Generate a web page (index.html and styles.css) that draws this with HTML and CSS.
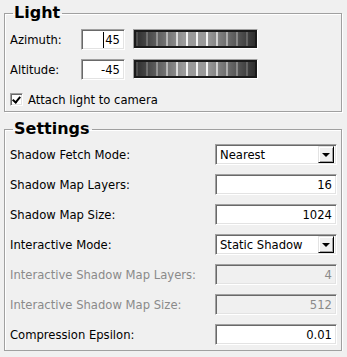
FILE: index.html
```html
<!DOCTYPE html>
<html lang="en">
<head>
    <meta charset="UTF-8">
    <title>Light Settings</title>
    <link rel="stylesheet" href="styles.css">
</head>
<body>
    <fieldset class="group light">
        <legend>Light</legend>
        <div class="row">
            <span class="label short">Azimuth:</span>
            <div class="field small"><span class="caret"></span>45</div>
            <div class="wheel"><div class="wheel-inner"></div></div>
        </div>
        <div class="row">
            <span class="label short">Altitude:</span>
            <div class="field small">-45</div>
            <div class="wheel"><div class="wheel-inner"></div></div>
        </div>
        <label class="check">
            <span class="box checked"></span>
            Attach light to camera
        </label>
    </fieldset>

    <fieldset class="group settings">
        <legend>Settings</legend>
        <div class="row">
            <span class="label">Shadow Fetch Mode:</span>
            <div class="combo">
                <span class="combo-text">Nearest</span>
                <span class="combo-btn"></span>
            </div>
        </div>
        <div class="row">
            <span class="label">Shadow Map Layers:</span>
            <div class="field wide">16</div>
        </div>
        <div class="row">
            <span class="label">Shadow Map Size:</span>
            <div class="field wide">1024</div>
        </div>
        <div class="row">
            <span class="label">Interactive Mode:</span>
            <div class="combo">
                <span class="combo-text">Static Shadow</span>
                <span class="combo-btn"></span>
            </div>
        </div>
        <div class="row disabled">
            <span class="label">Interactive Shadow Map Layers:</span>
            <div class="field wide">4</div>
        </div>
        <div class="row disabled">
            <span class="label">Interactive Shadow Map Size:</span>
            <div class="field wide">512</div>
        </div>
        <div class="row">
            <span class="label">Compression Epsilon:</span>
            <div class="field wide">0.01</div>
        </div>
    </fieldset>
</body>
</html>
```

FILE: styles.css
```css
body {
    margin: 0;
    padding: 5px 5px 0 4px;
    background-color: #f0f0f0;
    font-family: "DejaVu Sans", sans-serif;
    font-size: 11.6px;
    color: #000;
}
.group {
    margin: 0;
    padding: 8px 4px 5px 5px;
    border: 1px solid #a0a0a0;
    box-shadow: inset 1px 1px 0 #fff, 1px 1px 0 #fff;
    display: flex;
    flex-direction: column;
    gap: 9px;
}
.group legend {
    padding: 0 2px 0 1px;
    margin-left: 3px;
    font-size: 16px;
    line-height: 16px;
    font-weight: bold;
}
.settings {
    margin-top: 9px;
    padding-top: 7px;
}
.row {
    display: flex;
    align-items: center;
    height: 21px;
}
.label {
    flex: 1;
    white-space: nowrap;
}
.label.short {
    flex: 0 0 71px;
}
.disabled .label,
.disabled .field {
    color: #8a8a8a;
}
.disabled .field {
    background-color: #f0f0f0;
}
.field {
    box-sizing: border-box;
    height: 21px;
    background-color: #fff;
    border-style: solid;
    border-width: 1px;
    border-color: #a0a0a0 #fff #fff #a0a0a0;
    box-shadow: inset 1px 1px 0 #696969, inset -1px -1px 0 #e3e3e3;
    padding: 0 4px 0 0;
    display: flex;
    align-items: center;
    justify-content: flex-end;
}
.field.small {
    width: 44px;
}
.field.wide {
    width: 122px;
}
.caret {
    width: 1px;
    height: 16px;
    background-color: #000;
    margin-right: 1px;
}
.wheel {
    box-sizing: border-box;
    margin-left: 8px;
    width: 125px;
    height: 20px;
    border-style: solid;
    border-width: 1px;
    border-color: #a0a0a0 #fff #fff #a0a0a0;
    align-self: flex-start;
}
.wheel-inner {
    height: 100%;
    box-sizing: border-box;
    border: 2px solid #1a1a1a;
    background:
        linear-gradient(to right, rgba(0, 0, 0, 0.7), rgba(0, 0, 0, 0) 40%, rgba(0, 0, 0, 0) 60%, rgba(0, 0, 0, 0.7)),
        repeating-linear-gradient(to right, #f4f4f4 0 2px, #9a9a9a 2px 10px);
}
.check {
    display: flex;
    align-items: center;
    height: 13px;
    margin-top: 4px;
    gap: 5px;
}
.box {
    box-sizing: border-box;
    width: 13px;
    height: 13px;
    background-color: #fff;
    border-style: solid;
    border-width: 1px;
    border-color: #a0a0a0 #fff #fff #a0a0a0;
    box-shadow: inset 1px 1px 0 #696969, inset -1px -1px 0 #e3e3e3;
    position: relative;
}
.box.checked::after {
    content: "";
    position: absolute;
    left: 3px;
    top: 1px;
    width: 3px;
    height: 6px;
    border: solid #000;
    border-width: 0 2px 2px 0;
    transform: rotate(40deg);
}
.combo {
    box-sizing: border-box;
    width: 122px;
    height: 21px;
    background-color: #fff;
    border-style: solid;
    border-width: 1px;
    border-color: #a0a0a0 #fff #fff #a0a0a0;
    box-shadow: inset 1px 1px 0 #696969, inset -1px -1px 0 #e3e3e3;
    display: flex;
    align-items: center;
    padding: 2px;
}
.combo-text {
    flex: 1;
    padding-left: 2px;
}
.combo-btn {
    box-sizing: border-box;
    width: 16px;
    height: 17px;
    background-color: #f0f0f0;
    border-style: solid;
    border-width: 1px;
    border-color: #e3e3e3 #000 #000 #e3e3e3;
    box-shadow: inset 1px 1px 0 #fff, inset -1px -1px 0 #a0a0a0;
    display: flex;
    align-items: center;
    justify-content: center;
}
.combo-btn::after {
    content: "";
    border-style: solid;
    border-width: 4px 4px 0 4px;
    border-color: #000 transparent transparent transparent;
    margin-top: 1px;
}
```
